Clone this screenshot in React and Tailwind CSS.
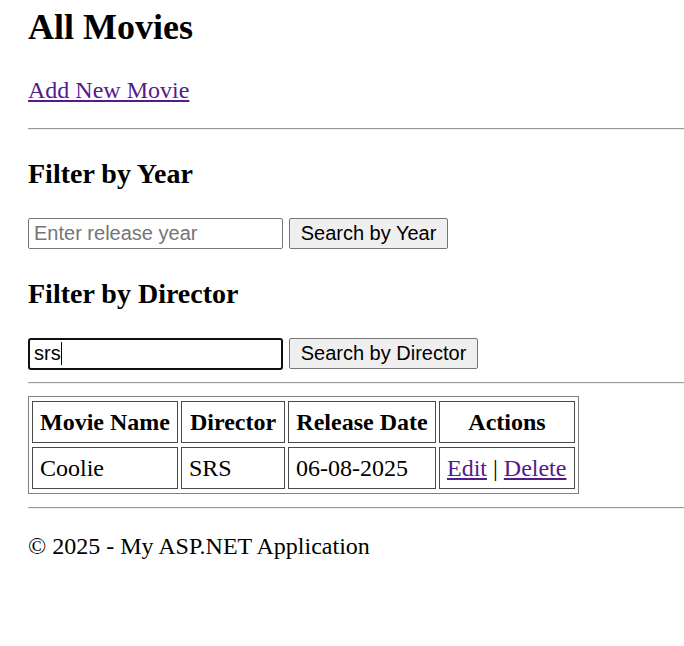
import React from "react";

export default function App() {
  const sans = "font-['Liberation_Sans',Arial,sans-serif]";
  const cell = "border border-[#4a4a4a] px-[7px] py-[7px] leading-[26px]";
  return (
    <div className="font-['Liberation_Serif','Times_New_Roman',serif] text-black bg-white min-h-[646px] pl-[28px] pt-[7px] text-[24px] leading-[26.6px] overflow-hidden">
      <h2 className="text-[36px] font-bold leading-[40px]">All Movies</h2>
      <p className="mt-[30px]">
        <a href="#" className="text-[#551a8b] underline">Add New Movie</a>
      </p>
      <div className="mt-[24px] h-[2px] border-t border-t-[#9a9a9a] border-b border-b-[#eeeeee]" />

      <h3 className="mt-[28px] text-[28px] font-bold leading-[31px]">Filter by Year</h3>
      <div className="mt-[29px] flex gap-[6px]">
        <input
          type="text"
          placeholder="Enter release year"
          className={`${sans} w-[255px] h-[31px] border border-[#767676] rounded-[2px] px-[5px] text-[20px] text-black placeholder:text-[#757575] outline-none bg-white`}
        />
        <button className={`${sans} w-[159px] h-[31px] border border-[#767676] rounded-[2px] bg-[#efefef] text-[20px] text-black leading-none`}>
          Search by Year
        </button>
      </div>

      <h3 className="mt-[29px] text-[28px] font-bold leading-[31px]">Filter by Director</h3>
      <div className="mt-[29px] flex gap-[6px]">
        <div className={`${sans} w-[255px] h-[32px] border-2 border-[#101010] rounded-[3px] px-[4px] text-[20px] text-black flex items-center bg-white`}>
          <span>srs</span>
          <span className="w-px h-[23px] bg-black" />
        </div>
        <button className={`${sans} w-[189px] h-[31px] border border-[#767676] rounded-[2px] bg-[#efefef] text-[20px] text-black leading-none`}>
          Search by Director
        </button>
      </div>

      <div className="mt-[12px] h-[2px] border-t border-t-[#9a9a9a] border-b border-b-[#eeeeee]" />

      <table className="mt-[12px] border border-[#808080] border-separate border-spacing-x-[3px] border-spacing-y-[4px]">
        <thead>
          <tr>
            <th className={`${cell} w-[146px] font-bold text-center`}>Movie Name</th>
            <th className={`${cell} w-[104px] font-bold text-center`}>Director</th>
            <th className={`${cell} w-[148px] font-bold text-center`}>Release Date</th>
            <th className={`${cell} w-[136px] font-bold text-center`}>Actions</th>
          </tr>
        </thead>
        <tbody>
          <tr>
            <td className={`${cell} text-left`}>Coolie</td>
            <td className={`${cell} text-left`}>SRS</td>
            <td className={`${cell} text-left`}>06-08-2025</td>
            <td className={`${cell} text-left`}>
              <a href="#" className="text-[#551a8b] underline">Edit</a> | <a href="#" className="text-[#551a8b] underline">Delete</a>
            </td>
          </tr>
        </tbody>
      </table>

      <div className="mt-[13px] h-[2px] border-t border-t-[#9a9a9a] border-b border-b-[#eeeeee]" />

      <p className="mt-[24px]">© 2025 - My ASP.NET Application</p>
    </div>
  );
}
